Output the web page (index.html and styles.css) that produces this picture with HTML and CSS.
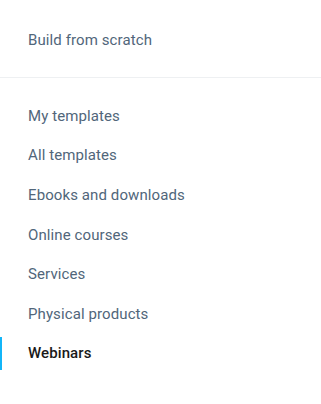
FILE: index.html
```html
<!DOCTYPE html>
<html lang="en">
<head>
  <meta charset="UTF-8">
  <meta name="viewport" content="width=device-width, initial-scale=1.0">
  <title>Templates</title>
  <link rel="stylesheet" href="styles.css">
</head>
<body>
  <nav class="sidebar">
    <div class="top">
      <a class="nav-link" href="#">Build from scratch</a>
    </div>
    <ul class="menu">
      <li><a class="nav-link" href="#">My templates</a></li>
      <li><a class="nav-link" href="#">All templates</a></li>
      <li><a class="nav-link" href="#">Ebooks and downloads</a></li>
      <li><a class="nav-link" href="#">Online courses</a></li>
      <li><a class="nav-link" href="#">Services</a></li>
      <li><a class="nav-link" href="#">Physical products</a></li>
      <li class="active"><a class="nav-link" href="#">Webinars</a></li>
    </ul>
  </nav>
</body>
</html>
```

FILE: styles.css
```css
body {
  margin: 0;
  padding: 0;
  background-color: #fff;
  font-family: Roboto, "Liberation Sans", Arial, sans-serif;
}

.sidebar {
  width: 321px;
}

.top {
  padding: 30px 28px 27px;
  border-bottom: 1px solid #eef0f2;
}

.nav-link {
  display: block;
  font-size: 15px;
  line-height: 20px;
  color: #51667a;
  text-decoration: none;
  letter-spacing: 0.1px;
}

.menu {
  list-style: none;
  margin: 0;
  padding: 18px 0 0;
}

.menu li {
  position: relative;
  display: flex;
  align-items: center;
  height: 39.6px;
  padding-left: 28px;
}

.menu li.active .nav-link {
  color: #1a1a1a;
  font-weight: 500;
}

.menu li.active::before {
  content: "";
  position: absolute;
  left: 0;
  top: 3px;
  bottom: 3px;
  width: 2px;
  background-color: #13b5f8;
}
```
